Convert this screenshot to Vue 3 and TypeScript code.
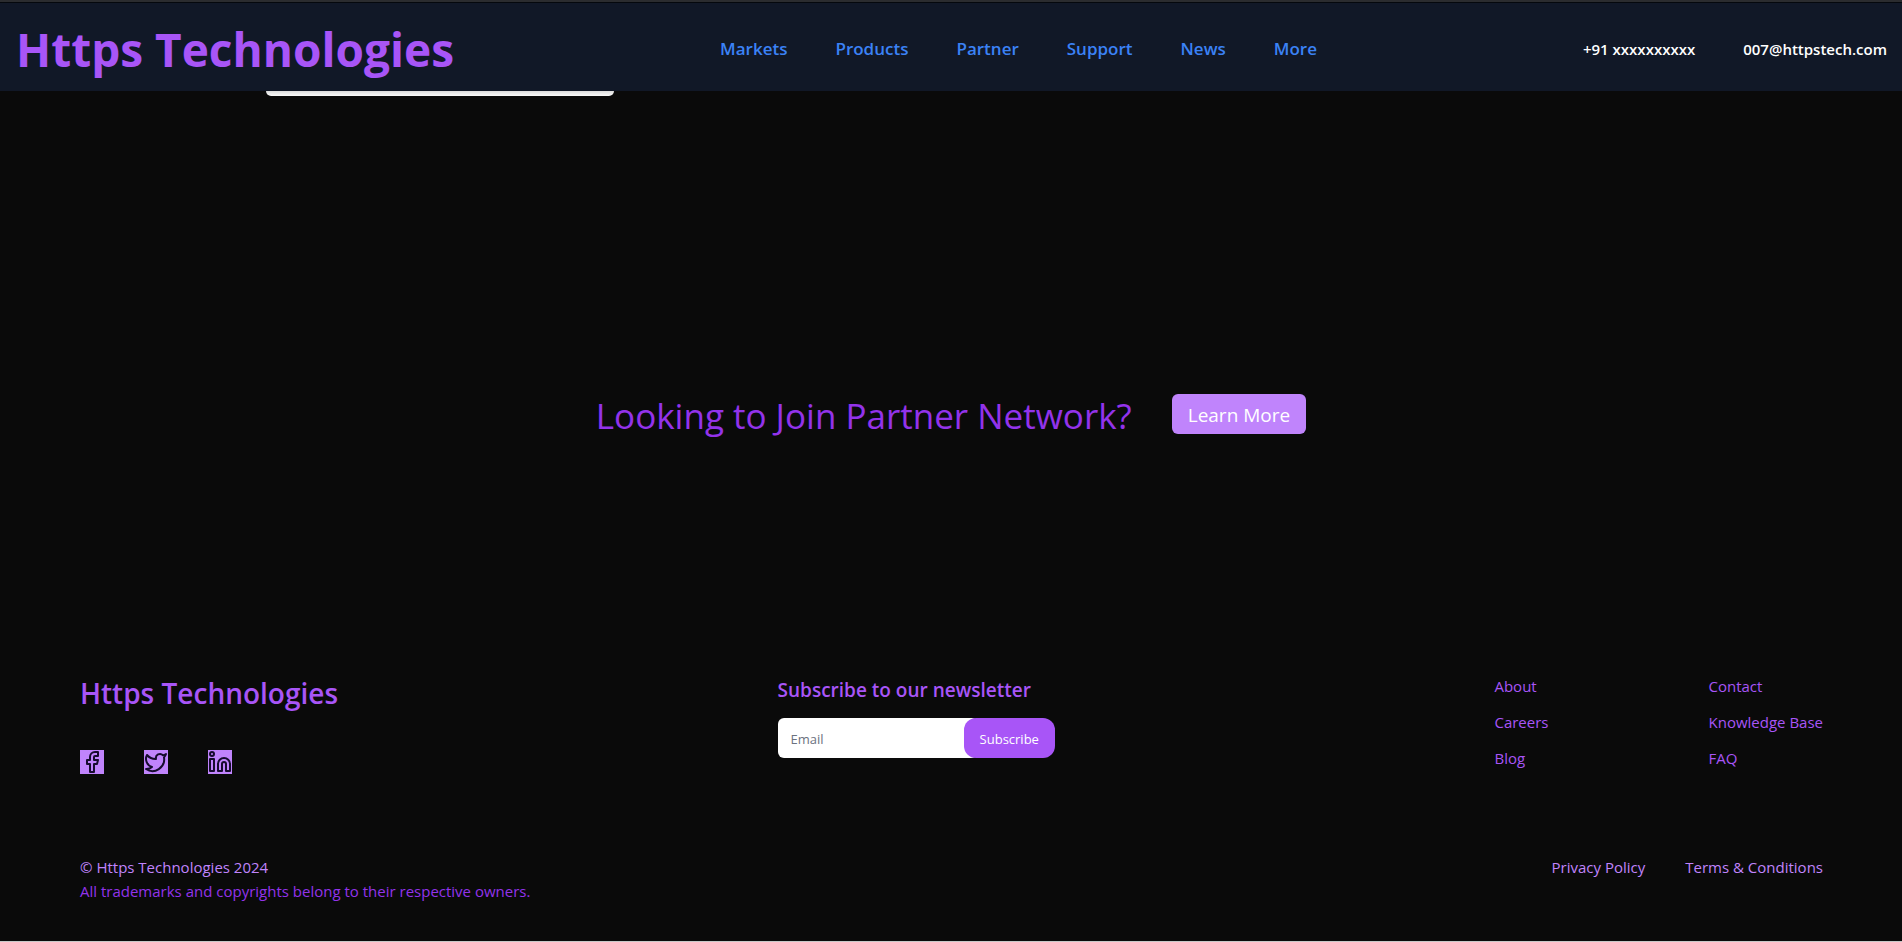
<script setup lang="ts">
import { ref } from 'vue'

const email = ref<string>('')
const navItems: string[] = ['Markets', 'Products', 'Partner', 'Support', 'News', 'More']
const linkColumns: string[][] = [
  ['About', 'Careers', 'Blog'],
  ['Contact', 'Knowledge Base', 'FAQ'],
]
const legalLinks: string[] = ['Privacy Policy', 'Terms & Conditions']
</script>

<template>
  <div class="page">
    <header class="topbar">
      <h1 class="brand">Https Technologies</h1>
      <nav class="nav" aria-label="Main">
        <a v-for="item in navItems" :key="item" href="#">{{ item }}</a>
      </nav>
      <div class="contacts">
        <a href="#">+91 xxxxxxxxxx</a>
        <a href="#">007@httpstech.com</a>
      </div>
    </header>

    <main>
      <div class="card-end"></div>
      <section class="cta">
        <h2>Looking to Join Partner Network?</h2>
        <button type="button">Learn More</button>
      </section>
    </main>

    <footer class="footer">
      <div class="footer-top">
        <div>
          <h2 class="footer-brand">Https Technologies</h2>
          <div class="socials">
            <a href="#" aria-label="Facebook">
              <svg viewBox="0 0 24 24">
                <path d="M18 2h-3a5 5 0 0 0-5 5v3H7v4h3v8h4v-8h3l1-4h-4V7a1 1 0 0 1 1-1h3z" />
              </svg>
            </a>
            <a href="#" aria-label="Twitter">
              <svg viewBox="0 0 24 24">
                <path d="M22 4s-.7 2.1-2 3.4c1.6 10-9.4 17.3-18 11.6 2.2.1 4.4-.6 6-2C3 15.5.5 9.6 3 5c2.2 2.6 5.6 4.1 9 4-.9-4.2 4-6.6 7-3.8 1.1 0 3-1.2 3-1.2z" />
              </svg>
            </a>
            <a href="#" aria-label="LinkedIn">
              <svg viewBox="0 0 24 24">
                <path d="M16 8a6 6 0 0 1 6 6v7h-4v-7a2 2 0 0 0-4 0v7h-4v-7a6 6 0 0 1 6-6z" />
                <rect x="2" y="9" width="4" height="12" />
                <circle cx="4" cy="4" r="2" />
              </svg>
            </a>
          </div>
        </div>

        <form class="newsletter" @submit.prevent>
          <label for="email">Subscribe to our newsletter</label>
          <div class="field">
            <input id="email" v-model="email" type="email" placeholder="Email" />
            <button type="submit">Subscribe</button>
          </div>
        </form>

        <div class="links">
          <ul v-for="(column, i) in linkColumns" :key="i">
            <li v-for="item in column" :key="item"><a href="#">{{ item }}</a></li>
          </ul>
        </div>
      </div>

      <div class="footer-bottom">
        <div>
          <p class="copyright">© Https Technologies 2024</p>
          <p class="trademarks">All trademarks and copyrights belong to their respective owners.</p>
        </div>
        <div class="legal">
          <a v-for="item in legalLinks" :key="item" href="#">{{ item }}</a>
        </div>
      </div>
    </footer>
  </div>
</template>

<style>
body {
  margin: 0;
  background: #0a0a0a;
}
</style>

<style scoped>
.page {
  box-sizing: border-box;
  min-height: 100vh;
  display: flex;
  flex-direction: column;
  border-top: 2px solid #2b2c2f;
  border-bottom: 1px solid #c8c8c8;
  background: #0a0a0a;
  font-family: "Open Sans", "Noto Sans", sans-serif;
  font-size: 15px;
  line-height: 24px;
}
h1, h2, p, ul {
  margin: 0;
  padding: 0;
}
ul {
  list-style: none;
}
a {
  color: inherit;
  text-decoration: none;
}
button {
  border: 0;
  color: #fff;
  font-family: inherit;
  cursor: pointer;
}
.topbar {
  display: flex;
  justify-content: space-between;
  align-items: center;
  padding: 22px 15px 18px 16px;
  border-top: 1px solid #05080d;
  background: #111827;
}
.brand {
  color: #a855f7;
  font-size: 46px;
  line-height: 48px;
  font-weight: 700;
}
.nav {
  display: flex;
  gap: 48px;
  color: #3b82f6;
  font-size: 17px;
  font-weight: 600;
}
.contacts {
  display: flex;
  gap: 48px;
  color: #fff;
  font-weight: 600;
}
main {
  display: flex;
  flex-direction: column;
}
.card-end {
  width: 348px;
  height: 5px;
  margin-left: 14%;
  border-radius: 0 0 6px 6px;
  background: linear-gradient(#dcdcdc, #fafafa);
}
.cta {
  display: flex;
  justify-content: center;
  align-items: center;
  gap: 40px;
  padding: 296px 0 238px;
}
.cta h2 {
  padding-top: 4px;
  color: #9333ea;
  font-size: 35px;
  line-height: 40px;
  font-weight: 400;
}
.cta button {
  padding: 7px 16px 5px;
  border-radius: 6px;
  background: #c084fc;
  font-size: 19px;
  line-height: 28px;
}
.footer {
  padding: 0 79px 37px 80px;
  color: #a855f7;
}
.footer-top {
  display: flex;
  justify-content: space-between;
  align-items: flex-start;
}
.footer-brand {
  margin-top: 1px;
  font-size: 28px;
  line-height: 36px;
  font-weight: 600;
}
.socials {
  display: flex;
  gap: 40px;
  margin-top: 39px;
}
.socials a {
  display: block;
  width: 24px;
  height: 24px;
  background: #c084fc;
}
.socials svg {
  display: block;
  fill: none;
  stroke: #160b2e;
  stroke-width: 2;
  stroke-linecap: round;
  stroke-linejoin: round;
}
.newsletter label {
  display: block;
  margin-bottom: 12px;
  font-size: 19px;
  line-height: 32px;
  font-weight: 600;
}
.field {
  display: flex;
}
.field input {
  box-sizing: border-box;
  width: 200px;
  height: 40px;
  padding: 2px 13px 0;
  border: 0;
  border-radius: 6px;
  background: #fff;
  color: #111827;
  font-family: inherit;
  font-size: 13px;
}
.field input::placeholder {
  color: #6b7280;
  opacity: 1;
}
.field button {
  margin-left: -14px;
  padding: 2px 16px 0;
  border-radius: 12px;
  background: #a855f7;
  font-size: 13px;
}
.links {
  display: flex;
  gap: 160px;
}
.links ul {
  display: flex;
  flex-direction: column;
  gap: 12px;
}
.footer-bottom {
  display: flex;
  justify-content: space-between;
  margin-top: 81px;
}
.copyright,
.legal {
  color: #c084fc;
}
.trademarks {
  color: #9333ea;
}
.legal {
  display: flex;
  gap: 40px;
}
</style>
